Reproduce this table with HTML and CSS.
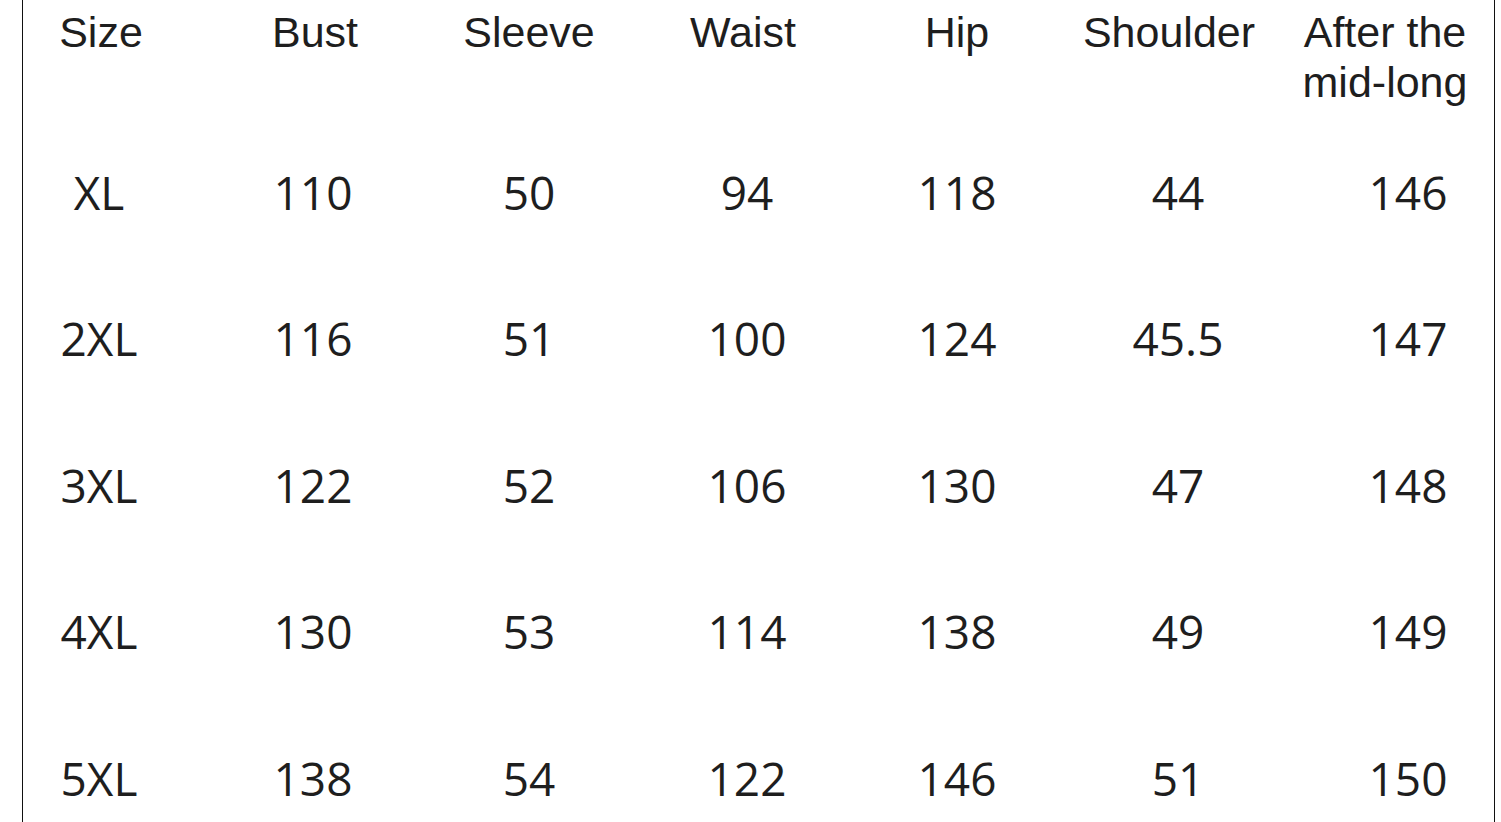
FILE: index.html
```html
<!DOCTYPE html>
<html lang="en">
<head>
<meta charset="utf-8">
<title>Size chart</title>
<link rel="stylesheet" href="styles.css">
</head>
<body>
<div class="chart">
  <div class="row head">
    <div class="cell">Size</div>
    <div class="cell">Bust</div>
    <div class="cell">Sleeve</div>
    <div class="cell">Waist</div>
    <div class="cell">Hip</div>
    <div class="cell">Shoulder</div>
    <div class="cell">After the<br>mid-long</div>
  </div>
  <div class="row data">
    <div class="cell">XL</div><div class="cell">110</div><div class="cell">50</div><div class="cell">94</div><div class="cell">118</div><div class="cell">44</div><div class="cell">146</div>
  </div>
  <div class="row data">
    <div class="cell">2XL</div><div class="cell">116</div><div class="cell">51</div><div class="cell">100</div><div class="cell">124</div><div class="cell">45.5</div><div class="cell">147</div>
  </div>
  <div class="row data">
    <div class="cell">3XL</div><div class="cell">122</div><div class="cell">52</div><div class="cell">106</div><div class="cell">130</div><div class="cell">47</div><div class="cell">148</div>
  </div>
  <div class="row data">
    <div class="cell">4XL</div><div class="cell">130</div><div class="cell">53</div><div class="cell">114</div><div class="cell">138</div><div class="cell">49</div><div class="cell">149</div>
  </div>
  <div class="row data">
    <div class="cell">5XL</div><div class="cell">138</div><div class="cell">54</div><div class="cell">122</div><div class="cell">146</div><div class="cell">51</div><div class="cell">150</div>
  </div>
</div>
</body>
</html>
```
FILE: styles.css
```css
html, body {
  margin: 0;
  padding: 0;
  background: #ffffff;
  overflow: hidden;
}

.chart {
  margin-left: 22px;
  width: 1471px;
  min-height: 822px;
  border-left: 1px solid #111111;
  border-right: 1px solid #111111;
  color: #1e1e1e;
}

.row {
  display: grid;
  grid-template-columns: 183px repeat(6, 214px);
}

.cell {
  text-align: center;
  white-space: nowrap;
}

.row .cell:first-child {
  padding-right: 31px;
}

.head {
  height: 118.5px;
  box-sizing: border-box;
  padding-top: 7px;
  font-family: "Liberation Sans", Arial, sans-serif;
  font-size: 43px;
  line-height: 50px;
}

.head .cell:first-child,
.head .cell:nth-child(2),
.head .cell:nth-child(3),
.head .cell:nth-child(4),
.head .cell:nth-child(5),
.head .cell:nth-child(7) {
  padding-left: 4px;
}

.data {
  height: 146.5px;
  font-family: "Open Sans", "Noto Sans", sans-serif;
  font-size: 46px;
  line-height: 146.5px;
}

.data .cell:nth-child(3) { padding-left: 4px; }
.data .cell:nth-child(4) { padding-left: 12px; }
.data .cell:nth-child(5) { padding-left: 4px; }
.data .cell:nth-child(6) { padding-left: 18px; }
.data .cell:nth-child(7) { padding-left: 50px; }
```
